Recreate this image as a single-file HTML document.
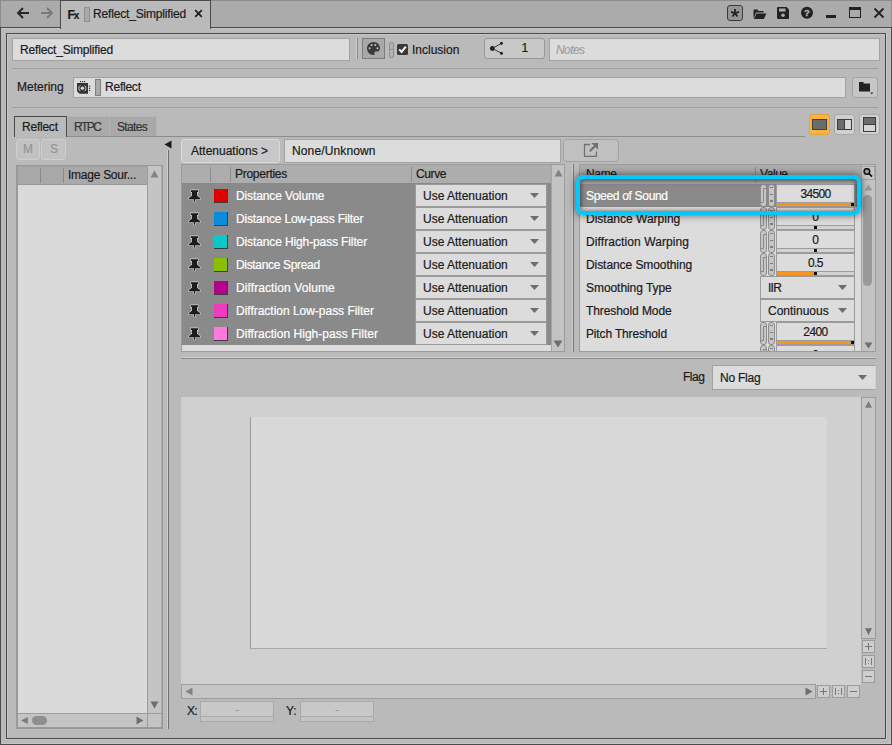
<!DOCTYPE html>
<html><head><meta charset="utf-8"><title>Reflect_Simplified</title>
<style>
*{box-sizing:border-box;margin:0;padding:0}
html,body{width:892px;height:745px;overflow:hidden}
body{position:relative;background:#bababa;font-family:"Liberation Sans",sans-serif;font-size:12px;color:#1a1a1a}
.a{position:absolute}
.t{position:absolute;white-space:nowrap;line-height:16px;font-size:12px;-webkit-text-stroke:0.2px}
.fld{position:absolute;background:#dcdcdc;border:1px solid #a2a2a2}
.btn{position:absolute;background:#c6c6c6;border:1px solid #a4a4a4;border-radius:3px}
.hl{position:absolute;height:1px;background:#a0a0a0}
</style></head><body>
<!-- window chrome -->
<div class="a" style="left:0;top:0;width:892px;height:28px;background:#ababab;border-top:1px solid #8c8c8c;border-left:1px solid #8c8c8c;border-right:1px solid #8c8c8c"></div>
<div class="a" style="left:0;top:27px;width:892px;height:718px;border:1px solid #4a4a4a;border-top-color:#4a4a4a"></div>
<div class="a" style="left:1px;top:28px;width:890px;height:716px;border-right:1px solid #c6c6c6;border-bottom:1px solid #c6c6c6;border-top:1px solid #c6c6c6"></div>
<!-- tab -->
<div class="a" id="tab" style="left:60px;top:0;width:151px;height:29px;background:#bababa;border:1px solid #4a4a4a;border-bottom:none"></div>
<!-- inner frame -->
<div class="a" style="left:6px;top:33px;width:880px;height:706px;border:1px solid #4a4a4a"></div>
<div class="a" style="left:7px;top:34px;width:878px;height:704px;border-left:1px solid #c6c6c6;border-top:1px solid #c6c6c6"></div>
<div class="a" style="left:6px;top:33px;width:881px;height:707px;border-right:1px solid #c6c6c6;border-bottom:1px solid #c6c6c6"></div>

<!-- title bar content -->
<svg class="a" style="left:16px;top:6px" width="40" height="15" viewBox="0 0 40 15">
<path d="M7 2 L2 7 L7 12 M2 7 H13" fill="none" stroke="#262626" stroke-width="1.9"/>
<path d="M31 2 L36 7 L31 12 M36 7 H25" fill="none" stroke="#7a7a7a" stroke-width="1.9"/>
</svg>
<div class="t" style="left:67.5px;top:7px;font-weight:bold;font-size:12px;letter-spacing:-1px;color:#1c1c1c">F<span style="font-size:10px">x</span></div>
<div class="a" style="left:84px;top:7px;width:6px;height:15px;background:#a9a9a9;border:1px solid #8f8f8f"></div>
<div class="t" id="tabtxt" style="left:93px;top:6px;letter-spacing:-0.17px">Reflect_Simplified</div>
<svg class="a" style="left:194px;top:9px" width="9" height="9" viewBox="0 0 9 9"><path d="M1.2 1.2 L7.8 7.8 M7.8 1.2 L1.2 7.8" stroke="#222" stroke-width="1.8" fill="none"/></svg>
<!-- right icons -->
<div class="a" style="left:727px;top:5px;width:16px;height:16px;background:#959595;border:1px solid #3a3a3a;border-radius:3px"></div>
<svg class="a" style="left:727px;top:5px" width="16" height="16" viewBox="0 0 16 16"><path d="M8 8.2 L8.00 4.00 M8 8.2 L11.99 6.90 M8 8.2 L10.47 11.60 M8 8.2 L5.53 11.60 M8 8.2 L4.01 6.90" stroke="#1e1e1e" stroke-width="1.7" fill="none"/></svg>
<svg class="a" style="left:752.5px;top:7.500px" width="14" height="12" viewBox="0 0 14 12"><path d="M0.5 10.5 V1.5 H4.5 L5.5 3 H10.5 V4.5 H3 Z" fill="#222"/><path d="M0.8 11 L3.5 5.5 H13.5 L10.8 11 Z" fill="#222"/></svg>
<svg class="a" style="left:777px;top:7px" width="12" height="12" viewBox="0 0 12 12"><path d="M0 1 Q0 0 1 0 H9.5 L12 2.5 V11 Q12 12 11 12 H1 Q0 12 0 11 Z" fill="#222"/><rect x="2" y="1.5" width="6.5" height="3" fill="#ababab"/><circle cx="6" cy="8.3" r="1.8" fill="#ababab"/></svg>
<svg class="a" style="left:800px;top:6px" width="14" height="14" viewBox="0 0 14 14"><circle cx="7" cy="6.700" r="6" fill="#222"/><text x="7" y="10.2" text-anchor="middle" font-family="Liberation Sans, sans-serif" font-weight="bold" font-size="9.5" fill="#b4b4b4" stroke="#b4b4b4" stroke-width="0.3">?</text></svg>
<div class="a" style="left:826px;top:15px;width:10px;height:3px;background:#222"></div>
<div class="a" style="left:849px;top:7px;width:12px;height:11px;border:1px solid #222;border-top-width:3px"></div>
<svg class="a" style="left:873px;top:7px" width="12" height="12" viewBox="0 0 12 12"><path d="M1.500 1.500 L10.500 10.500 M10.500 1.500 L1.500 10.500" stroke="#222" stroke-width="1.8" fill="none"/></svg>

<!-- row 1: name field etc -->
<div class="fld" style="left:12px;top:38px;width:338px;height:23px"></div>
<div class="t" style="left:20px;top:42px;letter-spacing:-0.17px">Reflect_Simplified</div>
<div class="a" style="left:356px;top:38px;width:1px;height:21px;background:#cdcdcd"></div><div class="a" style="left:357px;top:38px;width:1px;height:21px;background:#8a8a8a"></div>
<div class="a" style="left:362px;top:38px;width:23px;height:21px;background:#a9a9a9;border:1px solid #7c7c7c"></div>
<svg class="a" style="left:367px;top:42px" width="13" height="13" viewBox="0 0 13 13"><path d="M6.5 0 C2.9 0 0 2.900 0 6.500 C0 10.1 2.9 13 6.5 13 C7.6 13 7.9 12.3 7.500 11.5 C7 10.400 7.600 9.400 8.800 9.400 H10.300 C12 9.400 13 8.200 13 6.300 C13 2.800 10.100 0 6.500 0 Z" fill="#3a3a3a"/><circle cx="2.6" cy="6.3" r="1" fill="#c8c8c8"/><circle cx="4.6" cy="3.1" r="1" fill="#c8c8c8"/><circle cx="8.4" cy="3.1" r="1" fill="#c8c8c8"/><circle cx="10.5" cy="6.2" r="1" fill="#c8c8c8"/></svg>
<div class="a" style="left:389px;top:42px;width:5px;height:16px;border:1px solid #8e8e8e;background:#b4b4b4;border-radius:2px"></div>
<div class="a" style="left:389px;top:49px;width:5px;height:1px;background:#8e8e8e"></div>
<div class="a" style="left:397px;top:44px;width:11px;height:11px;background:#383838;border-radius:1.5px"></div>
<svg class="a" style="left:397px;top:44px" width="11" height="11" viewBox="0 0 11 11"><path d="M2.2 5.400 L4.600 8 L8.800 2.600" stroke="#f0f0f0" stroke-width="2.1" fill="none"/></svg>
<div class="t" style="left:412px;top:42px">Inclusion</div>
<div class="btn" style="left:484px;top:38px;width:61px;height:21px;border-color:#989898;background:#c8c8c8"></div>
<svg class="a" style="left:489px;top:41px" width="15" height="15" viewBox="0 0 15 15"><path d="M3.3 7.5 L12.5 2.2 M3.3 7.500 L12.5 12.3" stroke="#222" stroke-width="0.9" fill="none"/><circle cx="3.3" cy="7.5" r="2.4" fill="#222"/><circle cx="12.5" cy="2.2" r="1.5" fill="#222"/><circle cx="12.5" cy="12.3" r="1.5" fill="#222"/></svg>
<div class="t" style="left:521.5px;top:40px">1</div>
<div class="fld" style="left:549px;top:38px;width:331px;height:23px"></div>
<div class="t" style="left:556px;top:42px;font-style:italic;color:#a0a0a0;letter-spacing:-0.58px">Notes</div>
<div class="hl" style="left:12px;top:68px;width:866px"></div>
<!-- row 2: metering -->
<div class="t" style="left:17px;top:79px">Metering</div>
<div class="fld" style="left:73px;top:77px;width:773px;height:21px"></div>
<svg class="a" style="left:76px;top:80px" width="16" height="15" viewBox="0 0 16 15"><path d="M1 3 H12 V13.7 H3.600 L1 11.200 Z" fill="#333"/><circle cx="6.4" cy="8.3" r="1.8" fill="#d4d4d4"/><path d="M4.33 5.35 A3.6 3.6 0 0 0 4.33 11.25 M8.47 5.35 A3.6 3.6 0 0 1 8.47 11.25" fill="none" stroke="#cfcfcf" stroke-width="1"/><rect x="4" y="1" width="1.2" height="1.200" fill="#333"/><rect x="6" y="1" width="1.2" height="1.2" fill="#333"/><rect x="8" y="1" width="1.2" height="1.2" fill="#333"/><rect x="13" y="5.7" width="1.2" height="1.2" fill="#333"/><rect x="13" y="7.800" width="1.2" height="1.2" fill="#333"/><rect x="13" y="9.900" width="1.2" height="1.2" fill="#333"/></svg>
<div class="a" style="left:95px;top:79px;width:6px;height:17px;background:#a9a9a9;border:1px solid #808080"></div>
<div class="t" style="left:105px;top:79px;letter-spacing:-0.23px">Reflect</div>
<div class="btn" style="left:852px;top:77px;width:26px;height:21px"></div>
<svg class="a" style="left:859px;top:81.5px" width="16" height="13" viewBox="0 0 16 13"><path d="M0 0 H4.5 V1.5 H11 V9.5 H0 Z" fill="#222"/><path d="M11.2 10.5 H14.4 L12.8 12.3 Z" fill="#222"/></svg>
<div class="hl" style="left:12px;top:107px;width:866px"></div>

<!-- tabs row -->
<div class="hl" style="left:14px;top:136px;width:791px;background:#8c8c8c"></div>
<div class="a" style="left:67px;top:116px;width:43px;height:20px;background:#a9a9a9;border:1px solid #b4b4b4;border-bottom:none"></div>
<div class="a" style="left:109px;top:116px;width:48px;height:20px;background:#a9a9a9;border:1px solid #b4b4b4;border-bottom:none"></div>
<div class="a" style="left:14px;top:116px;width:53px;height:21px;background:#bababa;border:1px solid #4a4a4a;border-bottom:none"></div>
<div class="t" style="left:22px;top:119px;letter-spacing:-0.23px">Reflect</div>
<div class="t" style="left:74px;top:119px;color:#333;letter-spacing:-1.53px">RTPC</div>
<div class="t" style="left:117px;top:119px;color:#333;letter-spacing:-0.67px">States</div>
<!-- layout buttons -->
<div class="a" style="left:809px;top:114px;width:21px;height:21px;background:#fdb33c;border:1px solid #e0a446;border-radius:3px"></div>
<div class="a" style="left:812px;top:119px;width:15px;height:11px;background:#6c6c6c;border:1px solid #3c4048"></div>
<div class="btn" style="left:834px;top:114px;width:21px;height:21px;background:#d0d0d0;border-color:#a8a8a8"></div>
<div class="a" style="left:837px;top:119px;width:15px;height:11px;background:#d6d6d6;border:1px solid #3c3c3c"></div>
<div class="a" style="left:838px;top:120px;width:7px;height:9px;background:#6c6c6c;border-right:1px solid #3c3c3c"></div>
<div class="btn" style="left:859px;top:114px;width:21px;height:21px;background:#d0d0d0;border-color:#a8a8a8"></div>
<div class="a" style="left:863px;top:117px;width:13px;height:15px;background:#d6d6d6;border:1px solid #3c3c3c"></div>
<div class="a" style="left:864px;top:118px;width:11px;height:7px;background:#6c6c6c;border-bottom:1px solid #3c3c3c"></div>
<!-- left panel -->
<div class="btn" style="left:16px;top:139px;width:24px;height:21px;background:#c2c2c2;border-color:#cecece"></div>
<div class="btn" style="left:41px;top:139px;width:25px;height:21px;background:#c2c2c2;border-color:#cecece"></div>
<div class="t" style="left:23px;top:141px;color:#969696">M</div>
<div class="t" style="left:50px;top:141px;color:#969696;letter-spacing:-1.00px">S</div>
<svg class="a" style="left:164px;top:140px" width="8" height="9" viewBox="0 0 8 9"><path d="M7.5 0.5 V8.5 L0.5 4.5 Z" fill="#1a1a1a"/></svg>
<div class="a" style="left:168px;top:150px;width:1px;height:579px;background:#6e6e6e"></div>
<div class="a" style="left:167px;top:150px;width:1px;height:579px;background:#cdcdcd"></div>
<!-- list -->
<div class="a" style="left:16px;top:165px;width:147px;height:564px;background:#c4c4c4;border:2px solid #999;border-top-width:1px;border-right-width:1px"></div>
<div class="a" style="left:18px;top:185px;width:129px;height:528px;background:#dadada"></div>
<div class="a" style="left:18px;top:166px;width:129px;height:19px;background:#a9a9a9;border-top:1px solid #a0a0a0;border-bottom:1px solid #989898"></div>
<div class="a" style="left:40px;top:168px;width:1px;height:15px;background:#8a8a8a"></div>
<div class="a" style="left:63px;top:168px;width:1px;height:15px;background:#8a8a8a"></div>
<div class="a" style="left:147px;top:166px;width:1px;height:561px;background:#9c9c9c"></div><div class="a" style="left:161px;top:166px;width:1px;height:561px;background:#a8a8a8"></div>
<div class="a" style="left:18px;top:713px;width:144px;height:1px;background:#9c9c9c"></div>
<div class="t" style="left:68px;top:167px;letter-spacing:-0.26px">Image Sour...</div>
<svg class="a" style="left:150px;top:170px" width="9" height="8" viewBox="0 0 9 8"><path d="M0.5 7.5 H8.5 L4.5 0.5 Z" fill="#828282"/></svg>
<svg class="a" style="left:150px;top:701px" width="9" height="8" viewBox="0 0 9 8"><path d="M0.5 0.5 H8.5 L4.5 7.5 Z" fill="#6e6e6e"/></svg>
<svg class="a" style="left:20px;top:716px" width="8" height="9" viewBox="0 0 8 9"><path d="M7.800 1 V8 L1 4.500 Z" fill="#7c7c7c"/></svg>
<svg class="a" style="left:136px;top:716px" width="8" height="9" viewBox="0 0 8 9"><path d="M0.5 0.5 V8.5 L7.5 4.5 Z" fill="#6e6e6e"/></svg>
<div class="a" style="left:32px;top:716px;width:15px;height:9px;background:#8e8e8e;border-radius:4.5px"></div>

<!-- attenuations header -->
<div class="btn" style="left:181px;top:139px;width:99px;height:24px;background:#c8c8c8;border-color:#d9d9d9"></div>
<div class="t" style="left:191px;top:143px">Attenuations &gt;</div>
<div class="fld" style="left:284px;top:139px;width:277px;height:24px"></div>
<div class="t" style="left:292px;top:143px;letter-spacing:0.13px">None/Unknown</div>
<div class="btn" style="left:563px;top:139px;width:56px;height:23px;background:#c0c0c0;border-color:#a2a2a2;border-radius:4px"></div>
<svg class="a" style="left:583px;top:142px" width="16" height="16" viewBox="0 0 16 16"><path d="M7 2.500 H1.500 V14.400 H13.400 V9.500" fill="none" stroke="#707070" stroke-width="1.3"/><path d="M8.300 1 H15 V7.700 Z" fill="#707070"/><path d="M13 3 L6.800 9.200" stroke="#707070" stroke-width="2" fill="none"/></svg>
<!-- attenuation table -->
<div class="a" style="left:181px;top:164px;width:384px;height:188px;background:#dcdcdc;border:1px solid #9c9c9c"></div>
<div class="a" style="left:182px;top:165px;width:369px;height:18px;background:#adadad"></div>
<div class="a" style="left:210px;top:167px;width:1px;height:15px;background:#8e8e8e"></div>
<div class="a" style="left:230px;top:167px;width:1px;height:15px;background:#8e8e8e"></div>
<div class="a" style="left:411px;top:167px;width:1px;height:15px;background:#8e8e8e"></div>
<div class="t" style="left:235px;top:166px;letter-spacing:-0.27px">Properties</div>
<div class="t" style="left:416px;top:166px;letter-spacing:-0.40px">Curve</div>
<div class="a" style="left:182px;top:183px;width:369px;height:162px;background:#8a8a8a"></div>
<div class="a" style="left:551px;top:165px;width:13px;height:186px;background:#c3c3c3;border-left:1px solid #a4a4a4"></div>
<svg class="a" style="left:554px;top:169px" width="9" height="8" viewBox="0 0 9 8"><path d="M0.5 7.5 H8.5 L4.5 0.5 Z" fill="#828282"/></svg>
<svg class="a" style="left:553px;top:340px" width="10" height="8" viewBox="0 0 10 8"><path d="M0.5 0.5 H9.5 L5 7.5 Z" fill="#6e6e6e"/></svg>
<svg class="a" style="left:187px;top:189px" width="15" height="15" viewBox="0 0 15 15"><path d="M3.8 1.2 H11.2 V3 H10 V6.800 L13 9 V10.2 H8.1 V12.700 H6.9 V10.2 H2 V9 L5 6.8 V3 H3.800 Z" fill="#1c1c1c" stroke="#cfcfcf" stroke-width="1.3" paint-order="stroke" stroke-linejoin="round"/></svg>
<div class="a" style="left:214px;top:189px;width:14px;height:14px;background:#3c3c3c"></div><div class="a" style="left:214px;top:189px;width:13px;height:13px;background:#e00000"></div>
<div class="t" style="left:236px;top:188px;color:#fff;letter-spacing:-0.11px">Distance Volume</div>
<div class="a" style="left:415px;top:184px;width:132px;height:23px;background:#dcdcdc;border:1px solid #9a9a9a"></div>
<div class="t" style="left:423px;top:188px">Use Attenuation</div>
<svg class="a" style="left:530px;top:193px" width="9" height="5" viewBox="0 0 9 5"><path d="M0 0 H9 L4.5 5 Z" fill="#6e6e6e"/></svg>
<svg class="a" style="left:187px;top:212px" width="15" height="15" viewBox="0 0 15 15"><path d="M3.8 1.2 H11.2 V3 H10 V6.800 L13 9 V10.2 H8.1 V12.700 H6.9 V10.2 H2 V9 L5 6.8 V3 H3.800 Z" fill="#1c1c1c" stroke="#cfcfcf" stroke-width="1.3" paint-order="stroke" stroke-linejoin="round"/></svg>
<div class="a" style="left:214px;top:212px;width:14px;height:14px;background:#3c3c3c"></div><div class="a" style="left:214px;top:212px;width:13px;height:13px;background:#0a8cdc"></div>
<div class="t" style="left:236px;top:211px;color:#fff;letter-spacing:-0.17px">Distance Low-pass Filter</div>
<div class="a" style="left:415px;top:207px;width:132px;height:23px;background:#dcdcdc;border:1px solid #9a9a9a"></div>
<div class="t" style="left:423px;top:211px">Use Attenuation</div>
<svg class="a" style="left:530px;top:216px" width="9" height="5" viewBox="0 0 9 5"><path d="M0 0 H9 L4.5 5 Z" fill="#6e6e6e"/></svg>
<svg class="a" style="left:187px;top:235px" width="15" height="15" viewBox="0 0 15 15"><path d="M3.8 1.2 H11.2 V3 H10 V6.800 L13 9 V10.2 H8.1 V12.700 H6.9 V10.2 H2 V9 L5 6.8 V3 H3.800 Z" fill="#1c1c1c" stroke="#cfcfcf" stroke-width="1.3" paint-order="stroke" stroke-linejoin="round"/></svg>
<div class="a" style="left:214px;top:235px;width:14px;height:14px;background:#3c3c3c"></div><div class="a" style="left:214px;top:235px;width:13px;height:13px;background:#0ac8c8"></div>
<div class="t" style="left:236px;top:234px;color:#fff;letter-spacing:-0.12px">Distance High-pass Filter</div>
<div class="a" style="left:415px;top:230px;width:132px;height:23px;background:#dcdcdc;border:1px solid #9a9a9a"></div>
<div class="t" style="left:423px;top:234px">Use Attenuation</div>
<svg class="a" style="left:530px;top:239px" width="9" height="5" viewBox="0 0 9 5"><path d="M0 0 H9 L4.5 5 Z" fill="#6e6e6e"/></svg>
<svg class="a" style="left:187px;top:258px" width="15" height="15" viewBox="0 0 15 15"><path d="M3.8 1.2 H11.2 V3 H10 V6.800 L13 9 V10.2 H8.1 V12.700 H6.9 V10.2 H2 V9 L5 6.8 V3 H3.800 Z" fill="#1c1c1c" stroke="#cfcfcf" stroke-width="1.3" paint-order="stroke" stroke-linejoin="round"/></svg>
<div class="a" style="left:214px;top:258px;width:14px;height:14px;background:#3c3c3c"></div><div class="a" style="left:214px;top:258px;width:13px;height:13px;background:#8cbe00"></div>
<div class="t" style="left:236px;top:257px;color:#fff;letter-spacing:-0.33px">Distance Spread</div>
<div class="a" style="left:415px;top:253px;width:132px;height:23px;background:#dcdcdc;border:1px solid #9a9a9a"></div>
<div class="t" style="left:423px;top:257px">Use Attenuation</div>
<svg class="a" style="left:530px;top:262px" width="9" height="5" viewBox="0 0 9 5"><path d="M0 0 H9 L4.5 5 Z" fill="#6e6e6e"/></svg>
<svg class="a" style="left:187px;top:281px" width="15" height="15" viewBox="0 0 15 15"><path d="M3.8 1.2 H11.2 V3 H10 V6.800 L13 9 V10.2 H8.1 V12.700 H6.9 V10.2 H2 V9 L5 6.8 V3 H3.800 Z" fill="#1c1c1c" stroke="#cfcfcf" stroke-width="1.3" paint-order="stroke" stroke-linejoin="round"/></svg>
<div class="a" style="left:214px;top:281px;width:14px;height:14px;background:#3c3c3c"></div><div class="a" style="left:214px;top:281px;width:13px;height:13px;background:#b4008c"></div>
<div class="t" style="left:236px;top:280px;color:#fff;letter-spacing:0.09px">Diffraction Volume</div>
<div class="a" style="left:415px;top:276px;width:132px;height:23px;background:#dcdcdc;border:1px solid #9a9a9a"></div>
<div class="t" style="left:423px;top:280px">Use Attenuation</div>
<svg class="a" style="left:530px;top:285px" width="9" height="5" viewBox="0 0 9 5"><path d="M0 0 H9 L4.5 5 Z" fill="#6e6e6e"/></svg>
<svg class="a" style="left:187px;top:304px" width="15" height="15" viewBox="0 0 15 15"><path d="M3.8 1.2 H11.2 V3 H10 V6.800 L13 9 V10.2 H8.1 V12.700 H6.9 V10.2 H2 V9 L5 6.8 V3 H3.800 Z" fill="#1c1c1c" stroke="#cfcfcf" stroke-width="1.3" paint-order="stroke" stroke-linejoin="round"/></svg>
<div class="a" style="left:214px;top:304px;width:14px;height:14px;background:#3c3c3c"></div><div class="a" style="left:214px;top:304px;width:13px;height:13px;background:#ee3cbe"></div>
<div class="t" style="left:236px;top:303px;color:#fff;letter-spacing:-0.02px">Diffraction Low-pass Filter</div>
<div class="a" style="left:415px;top:299px;width:132px;height:23px;background:#dcdcdc;border:1px solid #9a9a9a"></div>
<div class="t" style="left:423px;top:303px">Use Attenuation</div>
<svg class="a" style="left:530px;top:308px" width="9" height="5" viewBox="0 0 9 5"><path d="M0 0 H9 L4.5 5 Z" fill="#6e6e6e"/></svg>
<svg class="a" style="left:187px;top:327px" width="15" height="15" viewBox="0 0 15 15"><path d="M3.8 1.2 H11.2 V3 H10 V6.800 L13 9 V10.2 H8.1 V12.700 H6.9 V10.2 H2 V9 L5 6.8 V3 H3.800 Z" fill="#1c1c1c" stroke="#cfcfcf" stroke-width="1.3" paint-order="stroke" stroke-linejoin="round"/></svg>
<div class="a" style="left:214px;top:327px;width:14px;height:14px;background:#3c3c3c"></div><div class="a" style="left:214px;top:327px;width:13px;height:13px;background:#ff78dc"></div>
<div class="t" style="left:236px;top:326px;color:#fff;letter-spacing:0.03px">Diffraction High-pass Filter</div>
<div class="a" style="left:415px;top:322px;width:132px;height:23px;background:#dcdcdc;border:1px solid #9a9a9a"></div>
<div class="t" style="left:423px;top:326px">Use Attenuation</div>
<svg class="a" style="left:530px;top:331px" width="9" height="5" viewBox="0 0 9 5"><path d="M0 0 H9 L4.5 5 Z" fill="#6e6e6e"/></svg>

<!-- vertical splitter between tables -->
<div class="a" style="left:573px;top:164px;width:1px;height:188px;background:#757575"></div>
<div class="a" style="left:572px;top:164px;width:1px;height:188px;background:#cdcdcd"></div>
<!-- properties table -->
<div class="a" id="ptable" style="left:579px;top:164px;width:297px;height:188px;background:#dcdcdc;border:1px solid #9c9c9c;overflow:hidden">
<div class="a" style="left:1px;top:0;width:294px;height:186px">
<div class="a" style="left:-1px;top:0;width:282px;height:19px;background:#adadad"></div>
<div class="a" style="left:174px;top:2px;width:1px;height:16px;background:#8e8e8e"></div>
<div class="t" style="left:5px;top:1px;letter-spacing:-0.33px">Name</div>
<div class="t" style="left:179px;top:1px;letter-spacing:-0.44px">Value</div>
<div class="a" style="left:280px;top:0;width:14px;height:186px;background:#c3c3c3;border-left:1px solid #a4a4a4"></div>
<div class="a" style="left:280px;top:1px;width:14px;height:14px;background:#c6c6c6;border:1px solid #a4a4a4"></div>
<svg class="a" style="left:282px;top:3px" width="11" height="11" viewBox="0 0 11 11"><circle cx="3.9" cy="3.5" r="2.8" fill="#9a9a9a" stroke="#111" stroke-width="1.5"/><path d="M6 5.600 L9 8.600" stroke="#111" stroke-width="1.8"/></svg>
<svg class="a" style="left:283px;top:19px" width="9" height="7" viewBox="0 0 9 7"><path d="M0.5 6.5 H8.5 L4.5 0.5 Z" fill="#999"/></svg>
<svg class="a" style="left:283px;top:177px" width="9" height="7" viewBox="0 0 9 7"><path d="M0.5 0.5 H8.5 L4.5 6.500 Z" fill="#6e6e6e"/></svg>
<div class="a" style="left:282px;top:30px;width:9px;height:91px;background:#999;border-radius:4.5px"></div>
<div class="a" style="left:-1px;top:19px;width:281px;height:23px;background:#8a8a8a"></div>
<div class="t" style="left:5px;top:23px;color:#fff;letter-spacing:-0.31px">Speed of Sound</div>
<div class="a" style="left:179px;top:19px;width:7px;height:23px;background:#c6c6c6;border:1px solid #8c8c8c;border-radius:3px"></div>
<svg class="a" style="left:180px;top:19px" width="5" height="23" viewBox="0 0 5 23"><path d="M5 4.5 H2.5 V18.5 H0" fill="none" stroke="#868686" stroke-width="1"/></svg>
<div class="a" style="left:187px;top:19px;width:7px;height:23px;background:#c6c6c6;border:1px solid #8c8c8c;border-radius:3px"></div>
<div class="a" style="left:189px;top:22px;width:3px;height:1px;background:#7e7e7e"></div><div class="a" style="left:189px;top:29px;width:3px;height:1px;background:#7e7e7e"></div><div class="a" style="left:189px;top:35px;width:3px;height:2px;background:#7e7e7e"></div>
<div class="a" style="left:195px;top:19px;width:79px;height:23px;background:#d2d2d2;border:1px solid #9c9c9c"></div>
<div class="a" style="left:196px;top:20px;width:77px;height:18px;background:#dcdcdc;border-bottom:1px solid #9c9c9c"></div>
<div class="a" style="left:196px;top:38px;width:74px;height:3px;background:#f7941d"></div>
<div class="a" style="left:270px;top:38px;width:3px;height:3px;background:#111"></div>
<div class="t" style="left:196px;top:21px;width:77px;text-align:center;letter-spacing:-0.68px">34500</div>
<div class="t" style="left:5px;top:46px;color:#1a1a1a">Distance Warping</div>
<div class="a" style="left:179px;top:42px;width:7px;height:23px;background:#c6c6c6;border:1px solid #8c8c8c;border-radius:3px"></div>
<svg class="a" style="left:180px;top:42px" width="5" height="23" viewBox="0 0 5 23"><path d="M5 4.5 H2.5 V18.5 H0" fill="none" stroke="#868686" stroke-width="1"/></svg>
<div class="a" style="left:187px;top:42px;width:7px;height:23px;background:#c6c6c6;border:1px solid #8c8c8c;border-radius:3px"></div>
<div class="a" style="left:189px;top:45px;width:3px;height:1px;background:#7e7e7e"></div><div class="a" style="left:189px;top:52px;width:3px;height:1px;background:#7e7e7e"></div><div class="a" style="left:189px;top:58px;width:3px;height:2px;background:#7e7e7e"></div>
<div class="a" style="left:195px;top:42px;width:79px;height:23px;background:#d2d2d2;border:1px solid #9c9c9c"></div>
<div class="a" style="left:196px;top:43px;width:77px;height:18px;background:#dcdcdc;border-bottom:1px solid #9c9c9c"></div>
<div class="a" style="left:233px;top:61px;width:3px;height:3px;background:#111"></div>
<div class="t" style="left:196px;top:44px;width:77px;text-align:center">0</div>
<div class="t" style="left:5px;top:69px;color:#1a1a1a;letter-spacing:0.09px">Diffraction Warping</div>
<div class="a" style="left:179px;top:65px;width:7px;height:23px;background:#c6c6c6;border:1px solid #8c8c8c;border-radius:3px"></div>
<svg class="a" style="left:180px;top:65px" width="5" height="23" viewBox="0 0 5 23"><path d="M5 4.5 H2.5 V18.5 H0" fill="none" stroke="#868686" stroke-width="1"/></svg>
<div class="a" style="left:187px;top:65px;width:7px;height:23px;background:#c6c6c6;border:1px solid #8c8c8c;border-radius:3px"></div>
<div class="a" style="left:189px;top:68px;width:3px;height:1px;background:#7e7e7e"></div><div class="a" style="left:189px;top:75px;width:3px;height:1px;background:#7e7e7e"></div><div class="a" style="left:189px;top:81px;width:3px;height:2px;background:#7e7e7e"></div>
<div class="a" style="left:195px;top:65px;width:79px;height:23px;background:#d2d2d2;border:1px solid #9c9c9c"></div>
<div class="a" style="left:196px;top:66px;width:77px;height:18px;background:#dcdcdc;border-bottom:1px solid #9c9c9c"></div>
<div class="a" style="left:233px;top:84px;width:3px;height:3px;background:#111"></div>
<div class="t" style="left:196px;top:67px;width:77px;text-align:center">0</div>
<div class="t" style="left:5px;top:92px;color:#1a1a1a;letter-spacing:-0.07px">Distance Smoothing</div>
<div class="a" style="left:179px;top:88px;width:7px;height:23px;background:#c6c6c6;border:1px solid #8c8c8c;border-radius:3px"></div>
<svg class="a" style="left:180px;top:88px" width="5" height="23" viewBox="0 0 5 23"><path d="M5 4.5 H2.5 V18.5 H0" fill="none" stroke="#868686" stroke-width="1"/></svg>
<div class="a" style="left:187px;top:88px;width:7px;height:23px;background:#c6c6c6;border:1px solid #8c8c8c;border-radius:3px"></div>
<div class="a" style="left:189px;top:91px;width:3px;height:1px;background:#7e7e7e"></div><div class="a" style="left:189px;top:98px;width:3px;height:1px;background:#7e7e7e"></div><div class="a" style="left:189px;top:104px;width:3px;height:2px;background:#7e7e7e"></div>
<div class="a" style="left:195px;top:88px;width:79px;height:23px;background:#d2d2d2;border:1px solid #9c9c9c"></div>
<div class="a" style="left:196px;top:89px;width:77px;height:18px;background:#dcdcdc;border-bottom:1px solid #9c9c9c"></div>
<div class="a" style="left:196px;top:107px;width:37px;height:3px;background:#f7941d"></div>
<div class="a" style="left:233px;top:107px;width:3px;height:3px;background:#111"></div>
<div class="t" style="left:196px;top:90px;width:77px;text-align:center;letter-spacing:-0.57px">0.5</div>
<div class="t" style="left:5px;top:115px;color:#1a1a1a;letter-spacing:-0.06px">Smoothing Type</div>
<div class="a" style="left:179px;top:111px;width:95px;height:23px;background:#dcdcdc;border:1px solid #9a9a9a"></div>
<div class="t" style="left:187px;top:115px;letter-spacing:-0.77px">IIR</div>
<svg class="a" style="left:257px;top:120px" width="9" height="5" viewBox="0 0 9 5"><path d="M0 0 H9 L4.5 5 Z" fill="#6e6e6e"/></svg>
<div class="t" style="left:5px;top:138px;color:#1a1a1a;letter-spacing:-0.08px">Threshold Mode</div>
<div class="a" style="left:179px;top:134px;width:95px;height:23px;background:#dcdcdc;border:1px solid #9a9a9a"></div>
<div class="t" style="left:187px;top:138px">Continuous</div>
<svg class="a" style="left:257px;top:143px" width="9" height="5" viewBox="0 0 9 5"><path d="M0 0 H9 L4.5 5 Z" fill="#6e6e6e"/></svg>
<div class="t" style="left:5px;top:161px;color:#1a1a1a;letter-spacing:-0.15px">Pitch Threshold</div>
<div class="a" style="left:179px;top:157px;width:7px;height:23px;background:#c6c6c6;border:1px solid #8c8c8c;border-radius:3px"></div>
<svg class="a" style="left:180px;top:157px" width="5" height="23" viewBox="0 0 5 23"><path d="M5 4.5 H2.5 V18.5 H0" fill="none" stroke="#868686" stroke-width="1"/></svg>
<div class="a" style="left:187px;top:157px;width:7px;height:23px;background:#c6c6c6;border:1px solid #8c8c8c;border-radius:3px"></div>
<div class="a" style="left:189px;top:160px;width:3px;height:1px;background:#7e7e7e"></div><div class="a" style="left:189px;top:167px;width:3px;height:1px;background:#7e7e7e"></div><div class="a" style="left:189px;top:173px;width:3px;height:2px;background:#7e7e7e"></div>
<div class="a" style="left:195px;top:157px;width:79px;height:23px;background:#d2d2d2;border:1px solid #9c9c9c"></div>
<div class="a" style="left:196px;top:158px;width:77px;height:18px;background:#dcdcdc;border-bottom:1px solid #9c9c9c"></div>
<div class="a" style="left:196px;top:176px;width:74px;height:3px;background:#f7941d"></div>
<div class="a" style="left:270px;top:176px;width:3px;height:3px;background:#111"></div>
<div class="t" style="left:196px;top:159px;width:77px;text-align:center;letter-spacing:-0.60px">2400</div>
<div class="a" style="left:179px;top:180px;width:7px;height:23px;background:#c6c6c6;border:1px solid #8c8c8c;border-radius:3px"></div>
<svg class="a" style="left:180px;top:180px" width="5" height="23" viewBox="0 0 5 23"><path d="M5 4.5 H2.5 V18.5 H0" fill="none" stroke="#868686" stroke-width="1"/></svg>
<div class="a" style="left:187px;top:180px;width:7px;height:23px;background:#c6c6c6;border:1px solid #8c8c8c;border-radius:3px"></div>
<div class="a" style="left:189px;top:183px;width:3px;height:1px;background:#7e7e7e"></div><div class="a" style="left:189px;top:190px;width:3px;height:1px;background:#7e7e7e"></div><div class="a" style="left:189px;top:196px;width:3px;height:2px;background:#7e7e7e"></div>
<div class="a" style="left:195px;top:180px;width:79px;height:23px;background:#d2d2d2;border:1px solid #9c9c9c"></div>
<div class="a" style="left:196px;top:181px;width:77px;height:18px;background:#dcdcdc;border-bottom:1px solid #9c9c9c"></div>
<div class="a" style="left:233px;top:199px;width:3px;height:3px;background:#111"></div>
<div class="t" style="left:196px;top:182px;width:77px;text-align:center">0</div>
</div></div>
<!-- highlight -->
<div class="a" style="left:576px;top:175px;width:285px;height:40px;border:4px solid #00c8fa;border-radius:7px;box-shadow:0 0 7px 1px rgba(0,0,0,.5), inset 0 1px 5px 1px rgba(0,0,0,.55)"></div>

<!-- horizontal splitter -->
<div class="a" style="left:181px;top:357px;width:695px;height:1px;background:#cdcdcd"></div>
<div class="a" style="left:181px;top:358px;width:695px;height:1px;background:#8a8a8a"></div>
<!-- flag -->
<div class="t" style="left:683px;top:369px;letter-spacing:-0.50px">Flag</div>
<div class="fld" style="left:712px;top:365px;width:164px;height:25px;border-color:#a2a2a2;border-right-color:#d0d0d0"></div>
<div class="t" style="left:720px;top:370px;letter-spacing:-0.24px">No Flag</div>
<svg class="a" style="left:858px;top:375px" width="9" height="5" viewBox="0 0 9 5"><path d="M0 0 H9 L4.5 5 Z" fill="#6e6e6e"/></svg>
<!-- graph -->
<div class="a" style="left:181px;top:397px;width:680px;height:288px;background:#d0d0d0"></div>
<div class="a" style="left:250px;top:417px;width:577px;height:232px;background:#d8d8d8;border-left:1px solid #9a9a9a;border-bottom:1px solid #a8a8a8"></div>
<!-- v scrollbar -->
<div class="a" style="left:861px;top:397px;width:15px;height:242px;background:#c6c6c6;border:1px solid #9c9c9c"></div>
<svg class="a" style="left:864px;top:400px" width="9" height="8" viewBox="0 0 9 8"><path d="M1 7.700 H8 L4.500 1 Z" fill="#7c7c7c"/></svg>
<svg class="a" style="left:864px;top:628px" width="9" height="8" viewBox="0 0 9 8"><path d="M1 0.300 H8 L4.500 7 Z" fill="#6e6e6e"/></svg>
<!-- h scrollbar -->
<div class="a" style="left:181px;top:684px;width:635px;height:15px;background:#c6c6c6;border:1px solid #9c9c9c"></div>
<svg class="a" style="left:185px;top:687px" width="8" height="9" viewBox="0 0 8 9"><path d="M7.5 0.5 V8.5 L0.5 4.5 Z" fill="#828282"/></svg>
<svg class="a" style="left:805px;top:687px" width="8" height="9" viewBox="0 0 8 9"><path d="M0.5 0.5 V8.5 L7.5 4.5 Z" fill="#6e6e6e"/></svg>
<div class="a" style="left:862px;top:640px;width:13px;height:13px;background:#cecece;border:1px solid #9c9c9c"></div>
<div class="a" style="left:865px;top:646px;width:7px;height:1px;background:#777"></div><div class="a" style="left:868px;top:643px;width:1px;height:7px;background:#777"></div>
<div class="a" style="left:862px;top:655px;width:13px;height:13px;background:#cecece;border:1px solid #9c9c9c"></div>
<div class="a" style="left:865px;top:658px;width:1px;height:7px;background:#777"></div><div class="a" style="left:871px;top:658px;width:1px;height:7px;background:#777"></div><div class="a" style="left:868px;top:660px;width:1px;height:1px;background:#777"></div><div class="a" style="left:868px;top:663px;width:1px;height:1px;background:#777"></div>
<div class="a" style="left:862px;top:670px;width:13px;height:13px;background:#cecece;border:1px solid #9c9c9c"></div>
<div class="a" style="left:865px;top:676px;width:7px;height:1px;background:#777"></div>
<div class="a" style="left:817px;top:685px;width:13px;height:13px;background:#cecece;border:1px solid #9c9c9c"></div>
<div class="a" style="left:820px;top:691px;width:7px;height:1px;background:#777"></div><div class="a" style="left:823px;top:688px;width:1px;height:7px;background:#777"></div>
<div class="a" style="left:832px;top:685px;width:13px;height:13px;background:#cecece;border:1px solid #9c9c9c"></div>
<div class="a" style="left:835px;top:688px;width:1px;height:7px;background:#777"></div><div class="a" style="left:841px;top:688px;width:1px;height:7px;background:#777"></div><div class="a" style="left:838px;top:690px;width:1px;height:1px;background:#777"></div><div class="a" style="left:838px;top:693px;width:1px;height:1px;background:#777"></div>
<div class="a" style="left:847px;top:685px;width:13px;height:13px;background:#cecece;border:1px solid #9c9c9c"></div>
<div class="a" style="left:850px;top:691px;width:7px;height:1px;background:#777"></div>
<!-- XY -->
<div class="t" style="left:187px;top:703px;letter-spacing:-0.65px">X:</div>
<div class="a" style="left:200px;top:701px;width:74px;height:16px;background:#c8c8c8;border:1px solid #aaa"></div>
<div class="a" style="left:200px;top:717px;width:74px;height:5px;background:#c4c4c4;border:1px solid #aaa;border-top:none"></div>
<div class="t" style="left:200px;top:701px;width:74px;text-align:center;color:#999;font-size:11px">-</div>
<div class="t" style="left:286px;top:703px;letter-spacing:-0.20px">Y:</div>
<div class="a" style="left:300px;top:701px;width:74px;height:16px;background:#c8c8c8;border:1px solid #aaa"></div>
<div class="a" style="left:300px;top:717px;width:74px;height:5px;background:#c4c4c4;border:1px solid #aaa;border-top:none"></div>
<div class="t" style="left:300px;top:701px;width:74px;text-align:center;color:#999;font-size:11px">-</div>
</body></html>
